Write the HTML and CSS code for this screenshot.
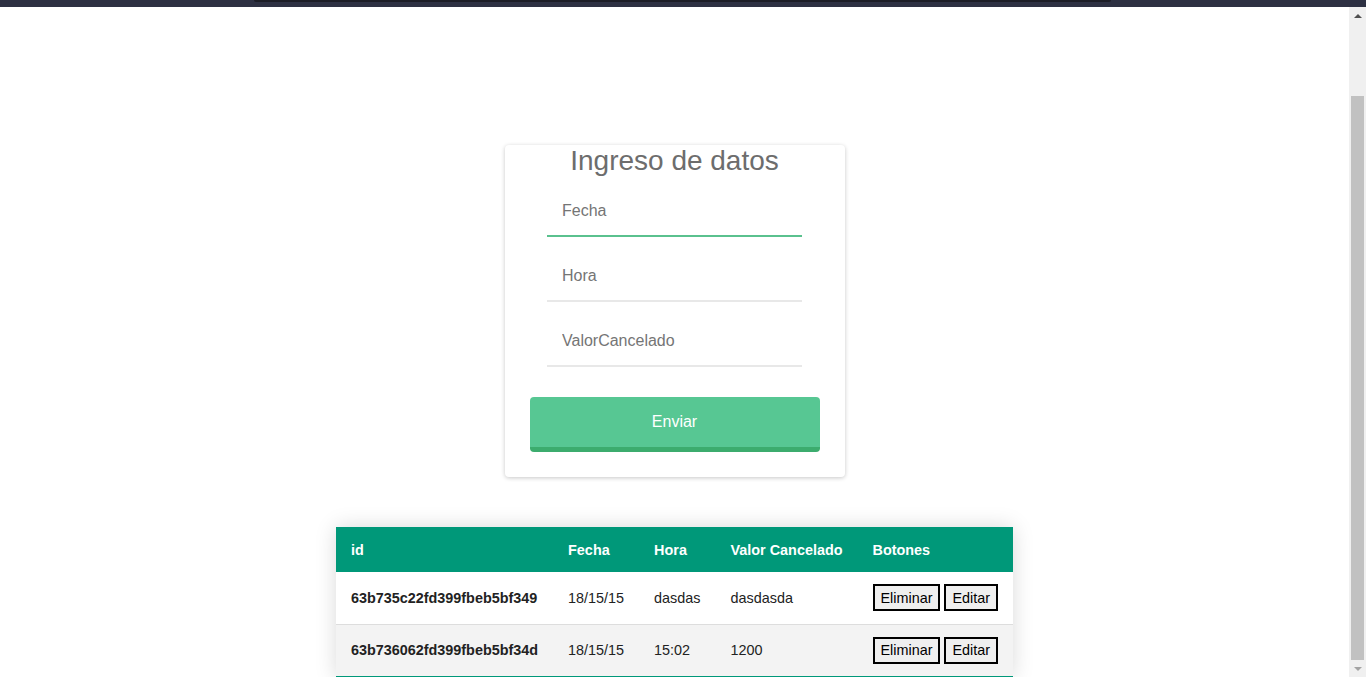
FILE: index.html
```html
<!DOCTYPE html>
<html lang="es">
<head>
<meta charset="utf-8">
<title>Ingreso de datos</title>
<link rel="stylesheet" href="styles.css">
</head>
<body>
<div class="chrome-strip">
  <div class="chrome-strip-inner"></div>
</div>
<div class="window">
  <div class="viewport" id="viewport">
    <main class="page">
      <form class="card">
        <h2 class="card-title">Ingreso de datos</h2>
        <div class="fields">
          <input class="field is-active" id="fecha" type="text" placeholder="Fecha">
          <input class="field" type="text" placeholder="Hora">
          <input class="field" type="text" placeholder="ValorCancelado">
        </div>
        <button class="submit" type="button">Enviar</button>
      </form>

      <table class="styled-table">
        <thead>
          <tr>
            <th>id</th>
            <th>Fecha</th>
            <th>Hora</th>
            <th>Valor Cancelado</th>
            <th>Botones</th>
          </tr>
        </thead>
        <tbody>
          <tr>
            <td class="id">63b735c22fd399fbeb5bf349</td>
            <td>18/15/15</td>
            <td>dasdas</td>
            <td>dasdasda</td>
            <td class="actions"><button class="row-btn" type="button">Eliminar</button> <button class="row-btn" type="button">Editar</button></td>
          </tr>
          <tr>
            <td class="id">63b736062fd399fbeb5bf34d</td>
            <td>18/15/15</td>
            <td>15:02</td>
            <td>1200</td>
            <td class="actions"><button class="row-btn" type="button">Eliminar</button> <button class="row-btn" type="button">Editar</button></td>
          </tr>
        </tbody>
      </table>
    </main>
  </div>
  <div class="scrollbar" aria-hidden="true">
    <div class="sb-btn sb-up"><span class="arrow-up"></span></div>
    <div class="sb-track"><div class="sb-thumb"></div></div>
    <div class="sb-btn sb-down"><span class="arrow-down"></span></div>
  </div>
</div>
<script src="script.js"></script>
</body>
</html>
```
FILE: styles.css
```css
html, body {
  margin: 0;
  padding: 0;
  height: 100%;
  overflow: hidden;
}

body {
  display: flex;
  flex-direction: column;
  background: #ffffff;
  font-family: "Liberation Sans", Arial, sans-serif;
  color: #222;
}

/* dark strip above the page */
.chrome-strip {
  height: 7px;
  flex: none;
  background: #2d3042;
  padding: 0 255px 0 254px;
}

.chrome-strip-inner {
  height: 2px;
  background: #1c1d26;
  border-radius: 0 0 3px 3px;
}

.window {
  flex: 1;
  display: flex;
  min-height: 0;
}

.viewport {
  flex: 1;
  overflow: hidden;
  background: #fff;
}

/* scrollbar */
.scrollbar {
  width: 17px;
  flex: none;
  background: #f0f0f0;
  display: flex;
  flex-direction: column;
}

.sb-btn {
  height: 17px;
  flex: none;
  display: flex;
  align-items: center;
  justify-content: center;
}

.arrow-up {
  width: 0;
  height: 0;
  border-left: 4px solid transparent;
  border-right: 4px solid transparent;
  border-bottom: 4px solid #505050;
}

.arrow-down {
  width: 0;
  height: 0;
  border-left: 4px solid transparent;
  border-right: 4px solid transparent;
  border-top: 4px solid #a3a3a3;
}

.sb-track {
  flex: 1;
  display: flex;
  flex-direction: column;
  justify-content: flex-end;
  padding: 0 2px;
}

.sb-thumb {
  height: 564px;
  background: #c1c1c1;
}

/* page */
.page {
  display: flex;
  flex-direction: column;
  align-items: center;
  padding-top: 225px;
}

.card {
  width: 340px;
  height: 332px;
  box-sizing: border-box;
  padding: 0 25px 25px;
  background: #fff;
  border-radius: 4px;
  box-shadow: 0 1px 4px rgba(0, 0, 0, 0.22);
  display: flex;
  flex-direction: column;
  margin-bottom: 50px;
}

.card-title {
  margin: 0;
  font-size: 28px;
  line-height: 32px;
  font-weight: normal;
  color: #6d6d6d;
  text-align: center;
}

.fields {
  display: flex;
  flex-direction: column;
  align-items: center;
  gap: 15px;
  margin-top: 10px;
}

.field {
  width: 255px;
  height: 50px;
  box-sizing: border-box;
  padding: 0 15px;
  border: none;
  border-bottom: 2px solid #e8e8e8;
  outline: none;
  font-family: "Liberation Sans", Arial, sans-serif;
  font-size: 16px;
  color: #333;
  background: transparent;
  caret-color: #000;
}

.field::placeholder {
  color: #757575;
}

.field.is-active,
.field:focus {
  border-bottom-color: #5ac18e;
}

.submit {
  margin-top: 30px;
  height: 55px;
  width: 100%;
  box-sizing: border-box;
  border: none;
  border-bottom: 5px solid #3cac6e;
  border-radius: 4px;
  background: #57c793;
  color: #fff;
  font-family: "Liberation Sans", Arial, sans-serif;
  font-size: 16px;
  padding: 0;
}

.styled-table {
  border-collapse: collapse;
  font-size: 14.4px;
  font-family: "Liberation Sans", Arial, sans-serif;
  box-shadow: 0 0 20px rgba(0, 0, 0, 0.15);
}

.styled-table thead tr {
  background-color: #009879;
  color: #ffffff;
  text-align: left;
}

.styled-table th {
  height: 45px;
  box-sizing: border-box;
  padding: 0 15px;
  font-weight: bold;
}

.styled-table td {
  padding: 12px 15px;
  height: 52px;
  box-sizing: border-box;
  color: #222;
}

.styled-table td.id {
  font-weight: bold;
}

.styled-table tbody tr {
  border-bottom: 1px solid #dddddd;
}

.styled-table tbody tr:nth-of-type(even) {
  background-color: #f3f3f3;
}

.styled-table tbody tr:last-of-type {
  border-bottom: 2px solid #009879;
}

.actions {
  white-space: nowrap;
}

.row-btn {
  height: 27px;
  box-sizing: border-box;
  padding: 0 6px;
  border: 2px solid #000;
  background: #efefef;
  color: #000;
  font-family: "Liberation Sans", Arial, sans-serif;
  font-size: 14.4px;
  border-radius: 0;
  vertical-align: middle;
}
```
FILE: script.js
```js
var vp = document.getElementById('viewport');
vp.scrollTop = vp.scrollHeight - vp.clientHeight - 1;
var f = document.getElementById('fecha');
if (f) { f.focus({ preventScroll: true }); }
```
